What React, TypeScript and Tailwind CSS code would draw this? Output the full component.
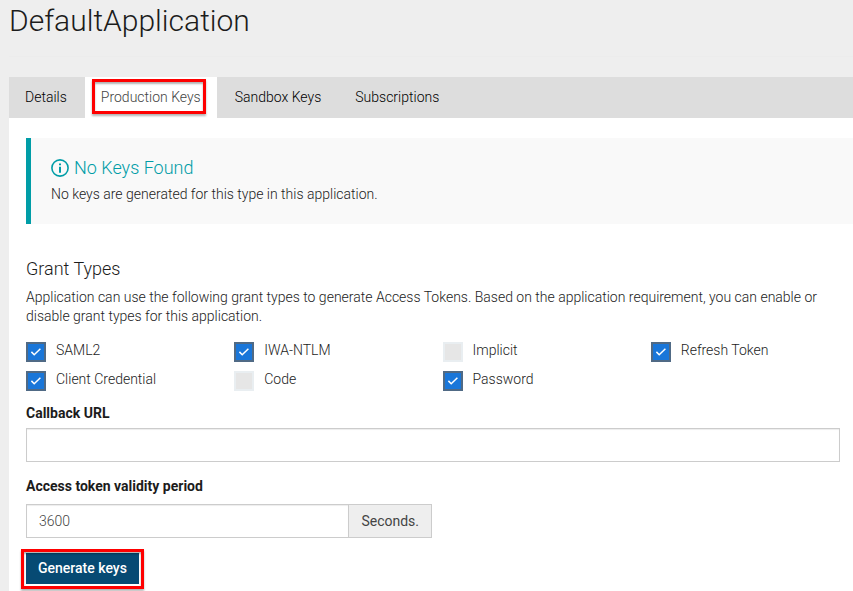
import { useState } from "react";

const tabs = ["Details", "Production Keys", "Sandbox Keys", "Subscriptions"];

const grantTypes = [
  { id: "saml2", label: "SAML2", enabled: true },
  { id: "iwa-ntlm", label: "IWA-NTLM", enabled: true },
  { id: "implicit", label: "Implicit", enabled: false },
  { id: "refresh-token", label: "Refresh Token", enabled: true },
  { id: "client-credential", label: "Client Credential", enabled: true },
  { id: "code", label: "Code", enabled: false },
  { id: "password", label: "Password", enabled: true },
];

function InfoIcon() {
  return (
    <svg className="size-[18px] shrink-0" viewBox="0 0 18 18" fill="none" aria-hidden="true">
      <circle cx="9" cy="9" r="8.1" stroke="currentColor" strokeWidth="1.6" />
      <path d="M8 4.4h2v1.8H8zM8 7.7h2v6H8z" fill="currentColor" />
    </svg>
  );
}

function Highlight({ className }: { className: string }) {
  return (
    <span
      aria-hidden="true"
      className={`pointer-events-none absolute border-3 border-[#fe0000] shadow-[0_2px_2px_rgba(0,0,0,0.3),inset_0_2px_2px_rgba(0,0,0,0.3)] ${className}`}
    />
  );
}

function GrantType({ id, label, enabled }: { id: string; label: string; enabled: boolean }) {
  const [checked, setChecked] = useState(enabled);
  return (
    <div className="flex h-[29px] items-start gap-[10px]">
      <span className="mt-[3px] grid size-5">
        <input
          id={id}
          type="checkbox"
          checked={checked}
          onChange={(event) => setChecked(event.target.checked)}
          className="peer col-start-1 row-start-1 size-5 appearance-none border-2 border-[#e9eef1] bg-[#e6e6e6] checked:border-[#506a85] checked:bg-[#1976d9]"
        />
        <svg
          viewBox="0 0 20 20"
          fill="none"
          aria-hidden="true"
          className="pointer-events-none invisible col-start-1 row-start-1 size-5 peer-checked:visible"
        >
          <path d="M5.4 9.9 8.2 12.7l6.2-6" stroke="#fff" strokeWidth="1.5" />
        </svg>
      </span>
      <label htmlFor={id} className="leading-[22px]">
        {label}
      </label>
    </div>
  );
}

export default function App() {
  return (
    <div className="min-h-screen overflow-x-hidden bg-[#eeeeee] pl-[9px] font-['Roboto',sans-serif] text-sm font-light text-[#1c1c1c]">
      <header className="mb-5 border-b border-[#ececec] pb-[14px]">
        <h1 className="text-3xl leading-[42px] font-light">DefaultApplication</h1>
      </header>

      <nav className="flex gap-[2px] bg-[#dddddd]">
        {tabs.map((tab) =>
          tab === "Production Keys" ? (
            <a key={tab} href="#" aria-current="page" className="relative bg-white px-4 leading-[41px] text-[#444444]">
              {tab}
              <Highlight className="top-[2px] right-[11px] bottom-[4px] left-[7px]" />
            </a>
          ) : (
            <a key={tab} href="#" className="px-4 leading-[41px] text-black">
              {tab}
            </a>
          ),
        )}
      </nav>

      <main className="bg-white pt-5 pb-2 pl-[17px]">
        <section className="border-l-5 border-[#009da7] bg-[#f9f9f9] px-5 pt-[18px] pb-5">
          <h2 className="flex items-center gap-[5px] text-lg leading-6 text-[#009da7]">
            <InfoIcon />
            No Keys Found
          </h2>
          <p className="pt-[4px] leading-5">No keys are generated for this type in this application.</p>
        </section>

        <form className="pt-[33px] pr-[13px]" onSubmit={(event) => event.preventDefault()}>
          <h2 className="text-lg leading-6">Grant Types</h2>
          <p className="mt-[7px] leading-[19px]">
            Application can use the following grant types to generate Access Tokens. Based on the application
            requirement, you can enable or disable grant types for this application.
          </p>

          <div className="-mr-[19px] mt-[13px] grid grid-cols-4">
            {grantTypes.map((grant) => (
              <GrantType key={grant.id} {...grant} />
            ))}
          </div>

          <label htmlFor="callback-url" className="mt-[6px] block leading-5 font-bold">
            Callback URL
          </label>
          <input
            id="callback-url"
            type="text"
            className="mt-[5px] block h-[34px] w-full border border-[#cccccc] bg-white px-3 text-[#444444] shadow-[inset_0_1px_1px_rgba(0,0,0,0.075)]"
          />

          <label htmlFor="validity" className="mt-[14px] block leading-5 font-bold">
            Access token validity period
          </label>
          <div className="mt-[8px] flex h-[34px] w-full max-w-[406px] text-[#444444]">
            <input
              id="validity"
              type="text"
              defaultValue="3600"
              className="min-w-0 flex-1 border border-[#cccccc] bg-white px-3 shadow-[inset_0_1px_1px_rgba(0,0,0,0.075)]"
            />
            <span className="border border-l-0 border-[#cccccc] bg-[#eeeeee] px-3 leading-8 font-normal">Seconds.</span>
          </div>

          <div className="relative mt-[15px] w-fit">
            <button type="submit" className="block h-[31px] bg-[#064a73] px-3 pb-px font-medium text-white">
              Generate keys
            </button>
            <Highlight className="-inset-x-[5px] -top-[4px] -bottom-[5px]" />
          </div>
        </form>
      </main>
    </div>
  );
}
